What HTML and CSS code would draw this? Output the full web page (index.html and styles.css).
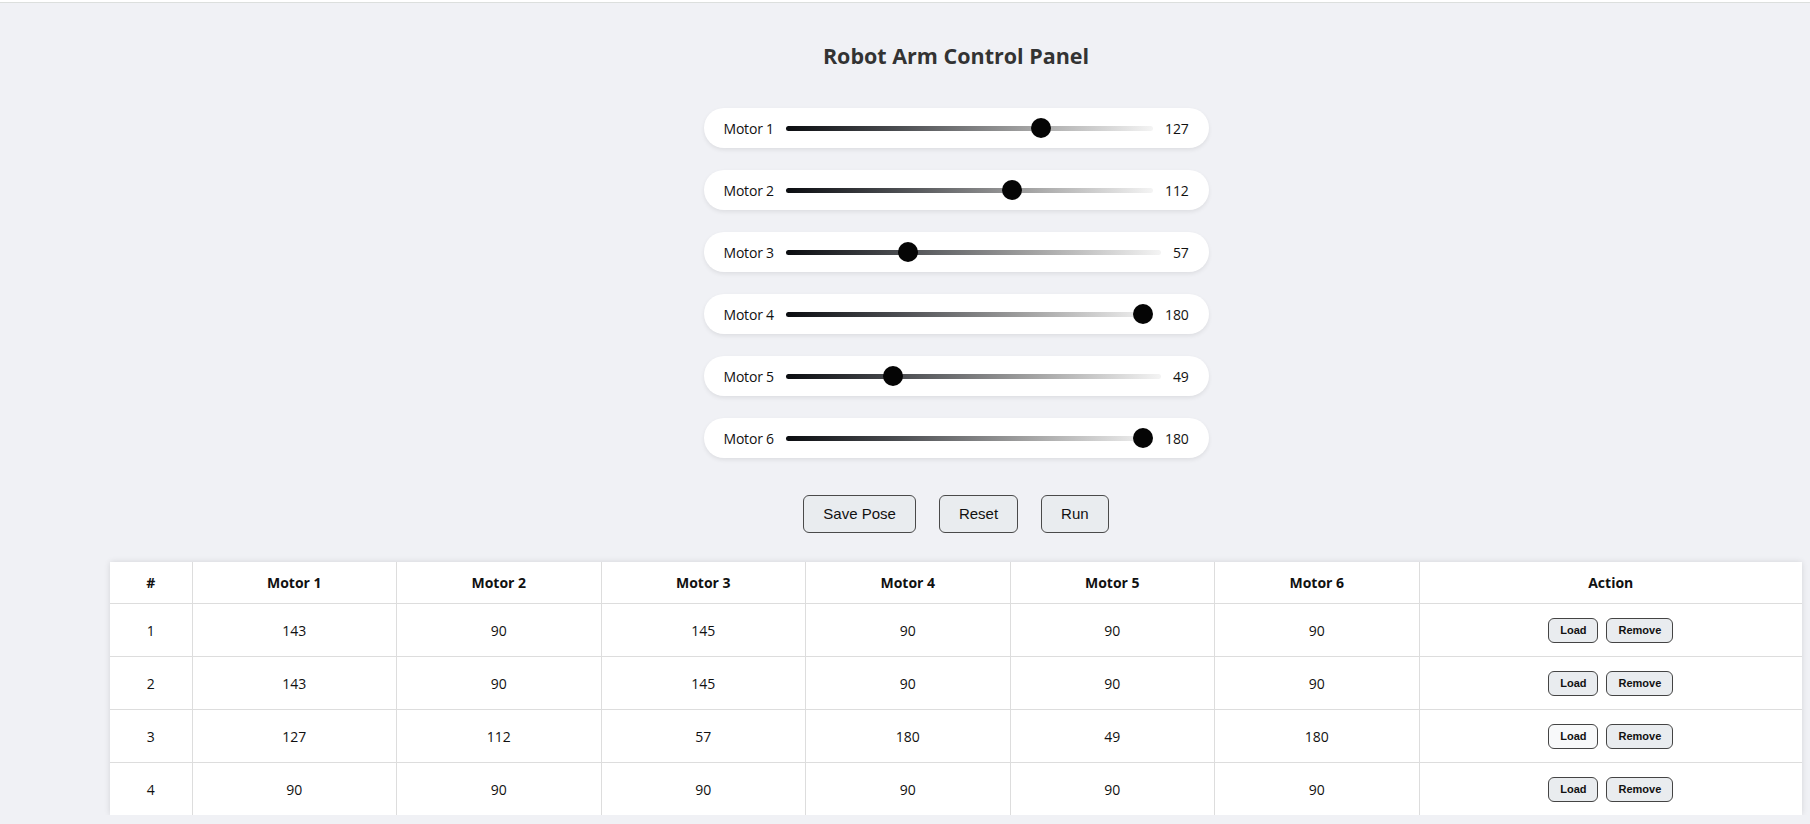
FILE: index.html
```html
<!DOCTYPE html>
<html lang="en">
<head>
<meta charset="utf-8">
<title>Robot Arm Control Panel</title>
<link rel="stylesheet" href="styles.css">
</head>
<body>
<div class="topline"></div>
<div class="page">
  <h1 class="title">Robot Arm Control Panel</h1>
  <div class="sliders">
    <div class="slider-row"><span class="slider-label">Motor 1</span><input class="slider" type="range" min="0" max="180" value="127"><span class="slider-value">127</span></div>
    <div class="slider-row"><span class="slider-label">Motor 2</span><input class="slider" type="range" min="0" max="180" value="112"><span class="slider-value">112</span></div>
    <div class="slider-row"><span class="slider-label">Motor 3</span><input class="slider" type="range" min="0" max="180" value="57"><span class="slider-value">57</span></div>
    <div class="slider-row"><span class="slider-label">Motor 4</span><input class="slider" type="range" min="0" max="180" value="180"><span class="slider-value">180</span></div>
    <div class="slider-row"><span class="slider-label">Motor 5</span><input class="slider" type="range" min="0" max="180" value="49"><span class="slider-value">49</span></div>
    <div class="slider-row"><span class="slider-label">Motor 6</span><input class="slider" type="range" min="0" max="180" value="180"><span class="slider-value">180</span></div>
  </div>
  <div class="controls">
    <button class="btn">Save Pose</button>
    <button class="btn">Reset</button>
    <button class="btn">Run</button>
  </div>
  <table class="poses">
    <colgroup>
      <col class="c-num"><col class="c-motor"><col class="c-motor"><col class="c-motor"><col class="c-motor"><col class="c-motor"><col class="c-motor"><col class="c-action">
    </colgroup>
    <thead>
      <tr><th>#</th><th>Motor 1</th><th>Motor 2</th><th>Motor 3</th><th>Motor 4</th><th>Motor 5</th><th>Motor 6</th><th>Action</th></tr>
    </thead>
    <tbody>
      <tr><td>1</td><td>143</td><td>90</td><td>145</td><td>90</td><td>90</td><td>90</td><td><div class="actions"><button class="sbtn">Load</button><button class="sbtn">Remove</button></div></td></tr>
      <tr><td>2</td><td>143</td><td>90</td><td>145</td><td>90</td><td>90</td><td>90</td><td><div class="actions"><button class="sbtn">Load</button><button class="sbtn">Remove</button></div></td></tr>
      <tr><td>3</td><td>127</td><td>112</td><td>57</td><td>180</td><td>49</td><td>180</td><td><div class="actions"><button class="sbtn sbtn-hover">Load</button><button class="sbtn">Remove</button></div></td></tr>
      <tr><td>4</td><td>90</td><td>90</td><td>90</td><td>90</td><td>90</td><td>90</td><td><div class="actions"><button class="sbtn">Load</button><button class="sbtn">Remove</button></div></td></tr>
    </tbody>
  </table>
</div>
</body>
</html>
```

FILE: styles.css
```css
html { background: #f0f1f5; }
body {
  margin: 0;
  font-family: "Open Sans", "Noto Sans", sans-serif;
  color: #111;
  background: #f0f1f5;
}
.topline {
  height: 2px;
  background: #ffffff;
  border-bottom: 1px solid #dcdfdd;
}
.page {
  width: 1692px;
  margin: 0 8px 0 110px;
}
.title {
  margin: 38px 0 0;
  height: 30px;
  line-height: 30px;
  text-align: center;
  font-size: 21.5px;
  font-weight: 700;
  color: #333;
}
.sliders {
  width: 505px;
  margin: 37px auto 0;
  display: flex;
  flex-direction: column;
  gap: 22px;
}
.slider-row {
  height: 40px;
  display: flex;
  align-items: center;
  gap: 12px;
  padding: 0 20px;
  background: #fff;
  border-radius: 20px;
  box-shadow: 0 2px 4px rgba(0,0,0,0.08);
  font-size: 14px;
  letter-spacing: -0.2px;
}
.slider-label { color: #111; }
.slider-value { color: #111; }
.slider {
  -webkit-appearance: none;
  appearance: none;
  flex: 1;
  margin: 0;
  height: 5px;
  border-radius: 3px;
  background: linear-gradient(to right, #0a0c10, #4a4c50 30%, #a0a0a0 65%, #f4f4f4);
  outline: none;
}
.slider::-webkit-slider-thumb {
  -webkit-appearance: none;
  appearance: none;
  width: 20px;
  height: 20px;
  border-radius: 50%;
  background: #050505;
  border: none;
}
.controls {
  margin-top: 37px;
  display: flex;
  justify-content: center;
  gap: 23px;
}
.btn {
  font-family: "Liberation Sans", Arial, sans-serif;
  font-size: 15px;
  line-height: 18px;
  padding: 9px 19px;
  border: 1px solid #4a4a4a;
  border-radius: 6px;
  background: #e9ecef;
  color: #111;
}
.poses {
  margin-top: 29px;
  width: 1692px;
  border-collapse: collapse;
  table-layout: fixed;
  background: #fff;
  box-shadow: 0 0 6px rgba(0,0,0,0.12);
  font-size: 14px;
}
.c-num { width: 82px; }
.c-motor { width: 204.5px; }
.c-action { width: 383px; }
.poses th, .poses td {
  border: 1px solid #dddddd;
  text-align: center;
  padding: 0;
}
.poses th {
  height: 41px;
  font-weight: 700;
  font-size: 14px;
  color: #111;
}
.poses td {
  height: 52px;
  color: #111;
}
.poses tr:first-child th { border-top: none; }
.poses tr:last-child td { border-bottom: none; }
.poses th:first-child, .poses td:first-child { border-left: none; }
.poses th:last-child, .poses td:last-child { border-right: none; }
.actions {
  display: flex;
  justify-content: center;
  gap: 8px;
}
.sbtn {
  font-family: "Liberation Sans", Arial, sans-serif;
  font-size: 11px;
  font-weight: 700;
  line-height: 13px;
  padding: 5px 11px;
  border: 1px solid #444;
  border-radius: 6px;
  background: #e9ecef;
  color: #111;
}
.sbtn-hover { background: #f8f9fa; }
```
